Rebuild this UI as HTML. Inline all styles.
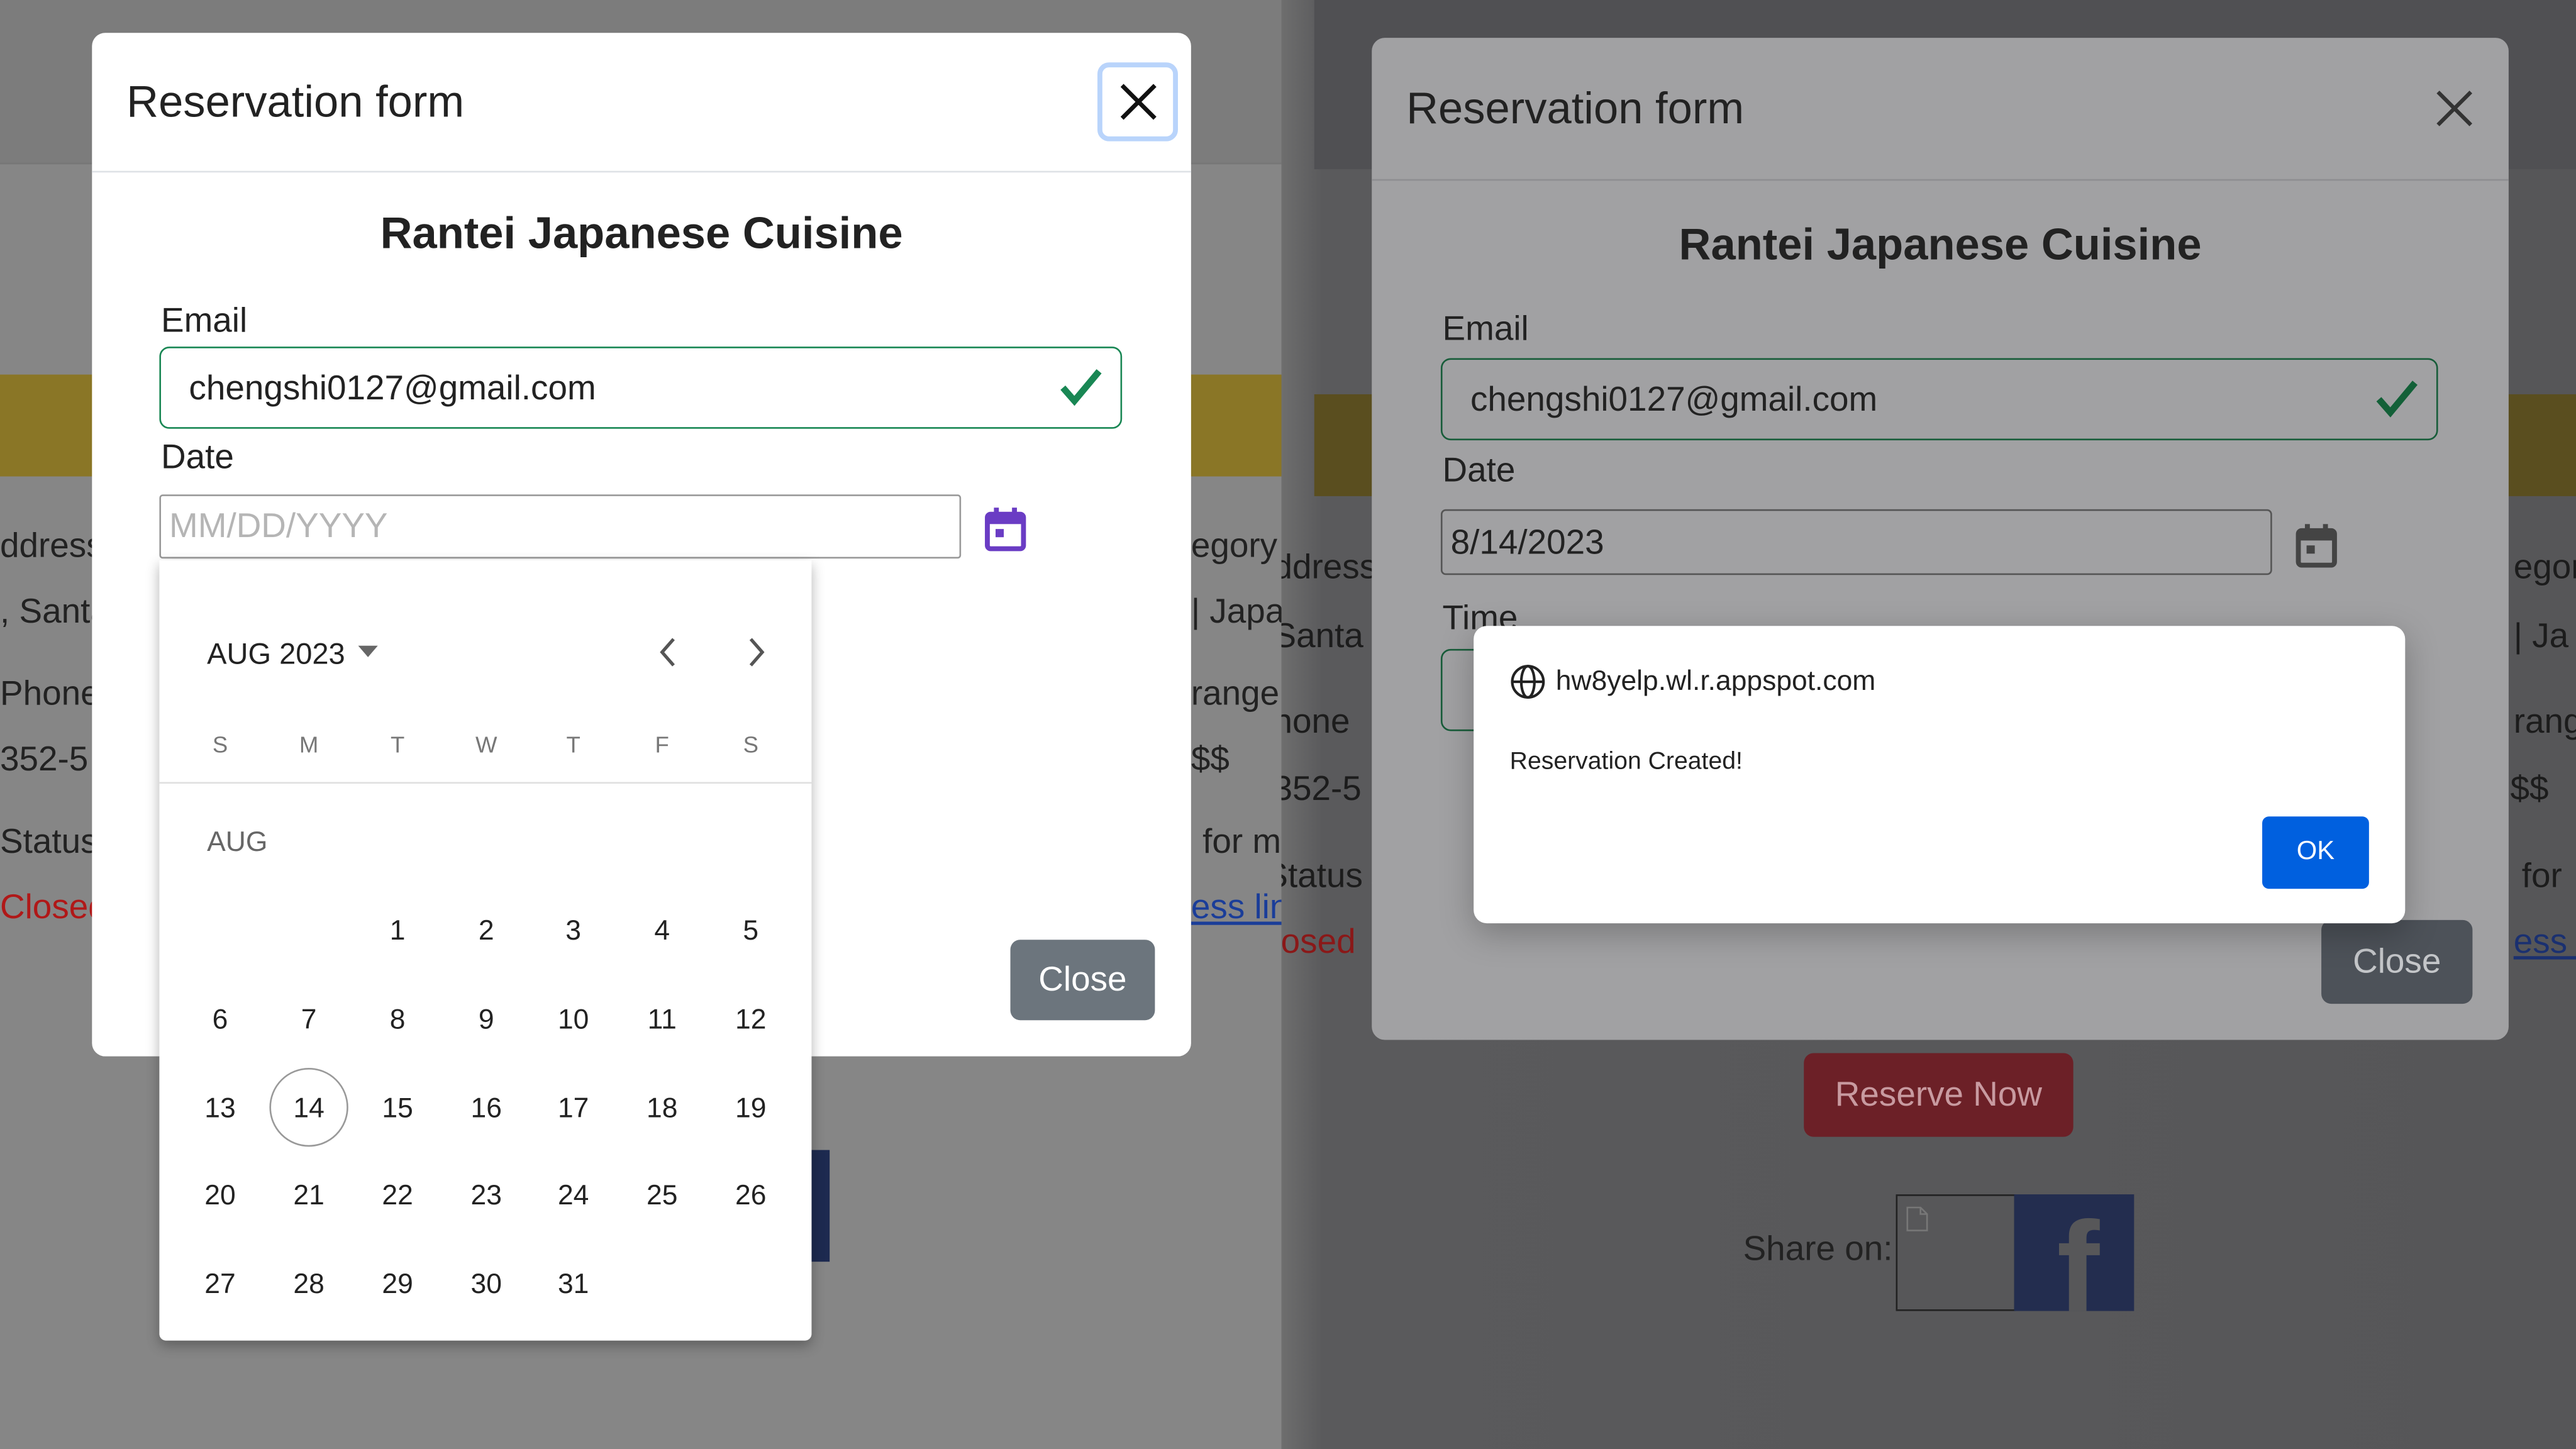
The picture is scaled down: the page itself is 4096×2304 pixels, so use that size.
<!DOCTYPE html>
<html><head><meta charset="utf-8"><style>
*{margin:0;padding:0;box-sizing:border-box}
html,body{width:4096px;height:2304px;overflow:hidden;background:#555}
#s{position:absolute;left:0;top:0;width:1568px;height:882px;transform:scale(2.612245);transform-origin:0 0;font-family:"Liberation Sans",sans-serif;overflow:hidden}
.a{position:absolute;white-space:nowrap}
.t{line-height:1}
.clip{position:absolute;overflow:hidden}
</style></head><body><div id="s">
<!-- left background -->
<div class="clip" style="left:0;top:0;width:790px;height:882px;background:#868686">
<div class="a" style="left:0;top:0;width:800px;height:100px;background:#7c7c7c;border-bottom:1px solid #777"></div>
<div class="a" style="left:0;top:228px;width:800px;height:62px;background:#8a7626"></div>
<div class="a t" style="left:0;top:322px;font-size:21px;color:#222">ddress</div>
<div class="a t" style="left:0;top:362px;font-size:21px;color:#222">, Santa</div>
<div class="a t" style="left:0;top:412px;font-size:21px;color:#222">Phone</div>
<div class="a t" style="left:0;top:452px;font-size:21px;color:#222">352-5</div>
<div class="a t" style="left:0;top:502px;font-size:21px;color:#222">Status</div>
<div class="a t" style="left:0;top:542px;font-size:21px;color:#b01818">Closed</div>
<div class="a" style="left:62px;top:550px;width:16px;height:1px;background:#999"></div>
<div class="a t" style="left:725px;top:322px;font-size:21px;color:#222">egory</div>
<div class="a t" style="left:725px;top:362px;font-size:21px;color:#222">| Japan</div>
<div class="a t" style="left:725px;top:412px;font-size:21px;color:#222">range</div>
<div class="a t" style="left:725px;top:452px;font-size:21px;color:#222">$$</div>
<div class="a t" style="left:732px;top:502px;font-size:21px;color:#222">for mo</div>
<div class="a" style="left:705px;top:550px;width:20px;height:1px;background:#999"></div>
<div class="a t" style="left:725px;top:542px;font-size:21px;color:#1a3d99;text-decoration:underline">ess link</div>
<div class="a" style="left:494px;top:700px;width:11px;height:68px;background:#1d2a50"></div>
</div>
<!-- right background -->
<div class="clip" style="left:780px;top:0;width:788px;height:882px;background:linear-gradient(90deg,#6e6e6e 0,#5a5a5c 25px,#565658 100%)">
<div class="a" style="left:20px;top:0;width:768px;height:103px;background:#505053"></div>
<div class="a" style="left:20px;top:240px;width:768px;height:62px;background:#5a4e1f"></div>
<div class="a t" style="left:-5px;top:335px;font-size:21px;color:#1c1c1c">ddress</div>
<div class="a t" style="left:-5px;top:377px;font-size:21px;color:#1c1c1c">Santa</div>
<div class="a t" style="left:-5px;top:429px;font-size:21px;color:#1c1c1c">hone</div>
<div class="a t" style="left:-5px;top:470px;font-size:21px;color:#1c1c1c">352-5</div>
<div class="a t" style="left:-10px;top:523px;font-size:21px;color:#1c1c1c">Status</div>
<div class="a" style="left:55px;top:537px;width:20px;height:1px;background:#777"></div>
<div class="a t" style="left:-5px;top:563px;font-size:21px;color:#8a1818">losed</div>
<div class="a t" style="left:750px;top:335px;font-size:21px;color:#1c1c1c">egory</div>
<div class="a t" style="left:750px;top:377px;font-size:21px;color:#1c1c1c">| Ja</div>
<div class="a t" style="left:750px;top:429px;font-size:21px;color:#1c1c1c">rang</div>
<div class="a t" style="left:748px;top:470px;font-size:21px;color:#1c1c1c">$$</div>
<div class="a t" style="left:755px;top:523px;font-size:21px;color:#1c1c1c">for</div>
<div class="a" style="left:727px;top:537px;width:20px;height:1px;background:#777"></div>
<div class="a t" style="left:750px;top:563px;font-size:21px;color:#1a3070;text-decoration:underline">ess li</div>
</div>
<div class="a" style="left:1098px;top:641px;width:164px;height:51px;background:#6c2027;border-radius:6px;color:#c89aa0;font-size:21px;text-align:center;line-height:51px">Reserve Now</div>
<div class="a t" style="left:1061px;top:750px;font-size:21px;color:#222">Share on:</div>
<div class="a" style="left:1154px;top:727px;width:73px;height:71px;border:1px solid #222;background:#575759"></div>
<svg class="a" style="left:1160px;top:734px" width="14" height="16" fill="none" stroke="#777" stroke-width="1"><path d="M1 1H9L13 5V15H1Z M9 1V5H13"/></svg>
<div class="a" style="left:1226px;top:727px;width:73px;height:71px;background:#232d4f;overflow:hidden"><div class="a" style="left:26px;top:5px;font-size:78px;font-weight:bold;color:#575759;line-height:1">f</div></div>

<!-- right modal -->
<div class="a" style="left:835px;top:23px;width:692px;height:610px;background:#a1a1a3;border-radius:8px"></div>
<div class="a t" style="left:856px;top:53px;font-size:27px;font-weight:500;color:#222">Reservation form</div>
<svg class="a" style="left:1482px;top:54px" width="24" height="24" viewBox="0 0 24 24"><path d="M2 2L22 22M22 2L2 22" stroke="#333" stroke-width="2.4"/></svg>
<div class="a" style="left:835px;top:109px;width:692px;height:1px;background:#8e8e91"></div>
<div class="a t" style="left:835px;top:136px;width:692px;text-align:center;font-size:27px;font-weight:bold;color:#222">Rantei Japanese Cuisine</div>
<div class="a t" style="left:878px;top:190px;font-size:21px;color:#222">Email</div>
<div class="a" style="left:877px;top:218px;width:607px;height:50px;border:1px solid #175c39;border-radius:6px"></div>
<div class="a t" style="left:895px;top:233px;font-size:21px;color:#222">chengshi0127@gmail.com</div>
<svg class="a" style="left:1445px;top:230px" width="28" height="26" viewBox="0 0 28 26"><path d="M3 13L10 21L25 3" fill="none" stroke="#136038" stroke-width="4"/></svg>
<div class="a t" style="left:878px;top:276px;font-size:21px;color:#222">Date</div>
<div class="a" style="left:877px;top:310px;width:506px;height:40px;border:1px solid #555;border-radius:3px"></div>
<div class="a t" style="left:883px;top:320px;font-size:21px;color:#222">8/14/2023</div>
<svg class="a" style="left:1397px;top:318px" width="26" height="28" viewBox="0 0 26 28"><rect x="2" y="5" width="22" height="21" rx="2" fill="none" stroke="#444" stroke-width="3"/><rect x="2" y="5" width="22" height="6" fill="#444"/><rect x="6" y="1" width="3" height="6" fill="#444"/><rect x="17" y="1" width="3" height="6" fill="#444"/><rect x="7" y="14" width="5" height="5" fill="#444"/></svg>
<div class="a t" style="left:878px;top:366px;font-size:21px;color:#222">Time</div>
<div class="a" style="left:877px;top:395px;width:60px;height:50px;border:1px solid #175c39;border-radius:6px"></div>
<div class="a" style="left:1413px;top:560px;width:92px;height:51px;background:#4d5259;border-radius:6px;color:#c4c6c9;font-size:21px;text-align:center;line-height:51px">Close</div>

<!-- alert -->
<div class="a" style="left:897px;top:381px;width:567px;height:181px;background:#fff;border-radius:8px;box-shadow:0 6px 20px rgba(0,0,0,.25)"></div>
<svg class="a" style="left:919px;top:404px" width="22" height="22" viewBox="0 0 22 22" fill="none" stroke="#222" stroke-width="1.6"><circle cx="11" cy="11" r="9.5"/><ellipse cx="11" cy="11" rx="4" ry="9.5"/><path d="M1.5 11H20.5"/></svg>
<div class="a t" style="left:947px;top:406px;font-size:17px;color:#222">hw8yelp.wl.r.appspot.com</div>
<div class="a t" style="left:919px;top:456px;font-size:15px;color:#222">Reservation Created!</div>
<div class="a" style="left:1377px;top:497px;width:65px;height:44px;background:#0060df;border-radius:4px;color:#fff;font-size:16px;text-align:center;line-height:44px">OK</div>

<!-- left modal -->
<div class="a" style="left:56px;top:20px;width:669px;height:623px;background:#fff;border-radius:8px"></div>
<div class="a t" style="left:77px;top:49px;font-size:27px;font-weight:500;color:#222">Reservation form</div>
<div class="a" style="left:668px;top:38px;width:49px;height:48px;border:3px solid #b9d4fb;border-radius:7px"></div>
<svg class="a" style="left:681px;top:50px" width="24" height="24" viewBox="0 0 24 24"><path d="M2 2L22 22M22 2L2 22" stroke="#111" stroke-width="2.6"/></svg>
<div class="a" style="left:56px;top:104px;width:669px;height:1px;background:#dee2e6"></div>
<div class="a t" style="left:56px;top:129px;width:669px;text-align:center;font-size:27px;font-weight:bold;color:#222">Rantei Japanese Cuisine</div>
<div class="a t" style="left:98px;top:185px;font-size:21px;color:#222">Email</div>
<div class="a" style="left:97px;top:211px;width:586px;height:50px;border:1px solid #198754;border-radius:6px"></div>
<div class="a t" style="left:115px;top:226px;font-size:21px;color:#222">chengshi0127@gmail.com</div>
<svg class="a" style="left:644px;top:223px" width="28" height="26" viewBox="0 0 28 26"><path d="M3 13L10 21L25 3" fill="none" stroke="#198754" stroke-width="4"/></svg>
<div class="a t" style="left:98px;top:268px;font-size:21px;color:#222">Date</div>
<div class="a" style="left:97px;top:301px;width:488px;height:39px;border:1px solid #999;border-radius:2px"></div>
<div class="a t" style="left:103px;top:310px;font-size:21px;color:#b5b5b5">MM/DD/YYYY</div>
<svg class="a" style="left:599px;top:308px" width="26" height="28" viewBox="0 0 26 28"><rect x="2" y="5" width="22" height="21" rx="2" fill="none" stroke="#6a3cc4" stroke-width="3"/><rect x="2" y="5" width="22" height="6" fill="#6a3cc4"/><rect x="6" y="1" width="3" height="6" fill="#6a3cc4"/><rect x="17" y="1" width="3" height="6" fill="#6a3cc4"/><rect x="7" y="14" width="5" height="5" fill="#6a3cc4"/></svg>
<div class="a" style="left:615px;top:572px;width:88px;height:49px;background:#6c757d;border-radius:6px;color:#fff;font-size:21px;text-align:center;line-height:49px">Close</div>

<!-- calendar popup -->
<div class="a" style="left:97px;top:341px;width:397px;height:475px;background:#fff;border-radius:0 0 4px 4px;box-shadow:0 3px 8px rgba(0,0,0,.3)"></div>
<div class="a t" style="left:126px;top:389px;font-size:18px;font-weight:500;color:#222">AUG 2023</div>
<svg class="a" style="left:218px;top:393px" width="12" height="8"><path d="M0 0H12L6 7Z" fill="#666"/></svg>
<svg class="a" style="left:400px;top:387px" width="12" height="20" fill="none" stroke="#555" stroke-width="2"><path d="M10 2L3 10L10 18"/></svg>
<svg class="a" style="left:455px;top:387px" width="12" height="20" fill="none" stroke="#555" stroke-width="2"><path d="M2 2L9 10L2 18"/></svg>
<div class="a" style="left:97px;top:476px;width:397px;height:1px;background:#e0e0e0"></div>
<div class="a t" style="left:126px;top:504px;font-size:17px;color:#666">AUG</div>
<div class="a" style="left:164px;top:650px;width:48px;height:48px;border:1px solid #999;border-radius:50%"></div>
<div id="cal"></div>
<script>
var cx=[134,188,242,296,349,403,457],h='';
var w=['S','M','T','W','T','F','S'];
for(var i=0;i<7;i++)h+='<div class="a t" style="left:'+(cx[i]-20)+'px;width:40px;text-align:center;top:446px;font-size:14px;color:#777">'+w[i]+'</div>';
var ry=[566,620,674,727,781];
for(var d=1;d<=31;d++){var p=d+1,r=Math.floor(p/7),c=p%7;
h+='<div class="a t" style="left:'+(cx[c]-20)+'px;width:40px;text-align:center;top:'+(ry[r]-8)+'px;font-size:17px;color:#222">'+d+'</div>';}
document.getElementById('cal').outerHTML=h;
</script>
</div></body></html>
